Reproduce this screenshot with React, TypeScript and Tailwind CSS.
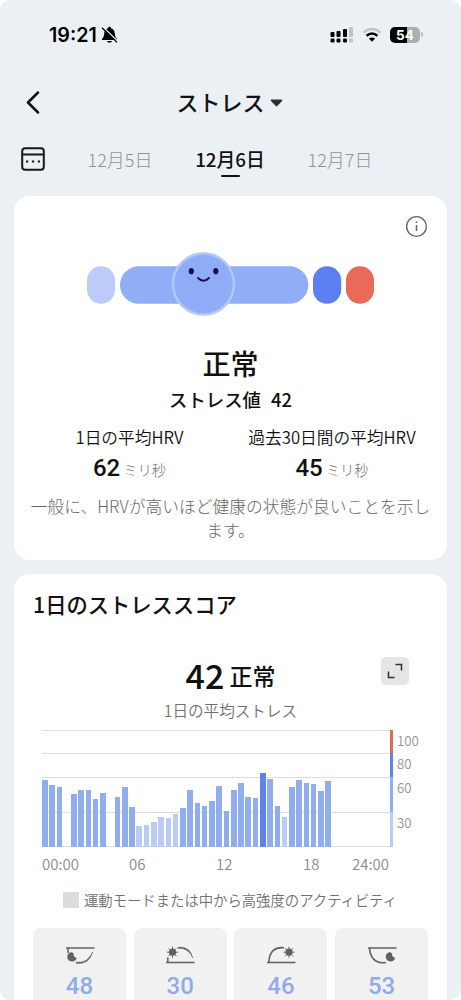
import type { ReactNode } from "react";

const days = ["12月5日", "12月6日", "12月7日"];

// one reading per half hour, 0 = no data
const scores = [
  57, 53, 51, 0, 45, 49, 49, 41, 46, 0, 43, 51, 34, 18, 19, 21, 26, 25, 28, 33, 49, 38, 35, 39,
  52, 31, 49, 55, 43, 42, 63, 58, 35, 26, 51, 57, 55, 54, 48, 56, 0, 0, 0, 0, 0, 0, 0, 0,
];

function Moon({ x }: { x: number }) {
  return (
    <path
      d="M4.8 6.3A4.7 4.7 0 1 0 10.6 11.8Q8.8 11.6 8 10.200Q7.300 9 7.600 7.400Q6.500 6.300 4.800 6.300Z"
      fill="#616161"
      transform={`translate(${x} 0)`}
    />
  );
}

function Sun({ x }: { x: number }) {
  return (
    <g transform={`translate(${x} 6.200)`} stroke="#616161" strokeWidth="0.900">
      <circle r="3.600" fill="#616161" stroke="none" />
      <path d="M0-5.700V5.700M-5.700 0H5.700M-4-4L4 4M-4 4L4-4" />
    </g>
  );
}

const periods: { value: number; icon: ReactNode }[] = [
  {
    value: 48,
    icon: (
      <>
        <path d="M0 2H28.500M2 2V7" stroke="#616161" strokeWidth="1.500" fill="none" />
        <path d="M10 16Q21 18 26.800 6Q23 19 10 17.200Z" fill="#616161" stroke="#616161" strokeWidth="0.500" />
        <Moon x={0} />
      </>
    ),
  },
  {
    value: 30,
    icon: (
      <>
        <path d="M0 16.500H28.500M1.800 16V11.500" stroke="#616161" strokeWidth="1.600" fill="none" />
        <path d="M12 1.200Q24 0 26.800 12Q23 2 12 2.300Z" fill="#616161" stroke="#616161" strokeWidth="0.500" />
        <Sun x={6.5} />
      </>
    ),
  },
  {
    value: 46,
    icon: (
      <>
        <path d="M0 16.500H28.500M2 16C2 6 8 0.500 17 1.800" stroke="#616161" strokeWidth="1.600" fill="none" />
        <Sun x={22} />
      </>
    ),
  },
  {
    value: 53,
    icon: (
      <>
        <path d="M0 2H28.500M1.500 2C2 12 8 18 18 16.500" stroke="#616161" strokeWidth="1.600" fill="none" />
        <Moon x={16.5} />
      </>
    ),
  },
];

function barColor(score: number) {
  if (score >= 60) return "bg-[#5f81ea]";
  if (score >= 30) return "bg-[#90adee]";
  return "bg-[#bccbf5]";
}

function StatusBar() {
  return (
    <div className="flex h-[69px] items-center justify-between pr-[38px] pl-[49px] text-black">
      <div className="flex items-center gap-[4px]">
        <span className="font-['Inter'] text-[19.700px] leading-6 font-semibold">19:21</span>
        <svg width="17" height="18" viewBox="0 0 17 18">
          <path d="M8.500 0.800C7.600 0.800 7 1.400 7 2.200C4.500 3 3.300 5 3.200 7.500C3 10.500 2.500 11 1 13V14H16V13C14.500 11 14 10.500 13.800 7.500C13.700 5 12.500 3 10 2.200C10 1.400 9.400 0.800 8.500 0.800zM6 15H11C10.500 17.300 6.500 17.300 6 15z" />
          <path d="M2 1L16.500 15" stroke="#ebf0f4" strokeWidth="1.300" />
          <path d="M1 1.700L16 16.400" stroke="#000" strokeWidth="1.300" />
        </svg>
      </div>
      <div className="flex items-center">
        <svg width="24" height="16" viewBox="0 0 24 16">
          <g fill="#050505">
            <rect x="0.500" y="5" width="4" height="5" rx="1" />
            <rect x="6.500" y="4" width="4" height="6" rx="1" />
            <rect x="13" y="2" width="4" height="8" rx="1" />
            <rect x="0.500" y="11.500" width="4" height="4" rx="1.200" />
            <rect x="6.500" y="11.500" width="4" height="4" rx="1.200" />
            <rect x="13" y="11.500" width="4" height="4" rx="1.200" />
          </g>
          <g fill="#bfc3c6">
            <rect x="19" y="0" width="4" height="10" rx="1" />
            <rect x="19" y="11.500" width="4" height="4" rx="1.200" />
          </g>
        </svg>
        <svg className="ml-2" width="20" height="16" viewBox="0 0 20 16" fill="none">
          <path d="M1.500 5.500Q10-1.500 18.500 5.500" stroke="#bfc3c6" strokeWidth="2.400" />
          <path d="M4.500 8.800Q10 4.200 15.500 8.800" stroke="#050505" strokeWidth="2.600" />
          <path d="M10 14.800L6.800 11.500Q10 9.400 13.200 11.500z" fill="#050505" />
        </svg>
        <div className="ml-[8px] flex h-4 w-[30px] items-center justify-center rounded-[5px] bg-linear-to-r from-[#050505] from-55% to-[#adb0b2] to-55% font-['Inter'] text-[13.500px] leading-4 font-bold text-white">
          54
        </div>
        <div className="ml-px h-[5px] w-[2px] rounded-r bg-[#b8bbbd]" />
      </div>
    </div>
  );
}

function Header() {
  return (
    <>
      <div className="relative flex h-[68px] items-center justify-center">
        <svg className="absolute top-[22px] left-[26px]" width="14" height="23" viewBox="0 0 14 23" fill="none">
          <path d="M12 1.500L2 11.500L12 21.500" stroke="#111318" strokeWidth="2.500" strokeLinecap="round" strokeLinejoin="round" />
        </svg>
        <h1 className="flex items-center pr-[2px] pb-[4px] text-[22px] font-medium">
          ストレス
          <svg className="mt-[3px] ml-[5px]" width="13" height="8" viewBox="0 0 13 8">
            <path d="M1.500 0.500H11.500Q13 0.800 12 2L7.500 6.800Q6.500 7.800 5.500 6.800L1 2Q0 0.800 1.500 0.500z" fill="#292e38" />
          </svg>
        </h1>
      </div>
      <div className="flex h-[59px] pl-[21px]">
        <svg className="mt-[10px] shrink-0" width="24" height="24" viewBox="0 0 24 24" fill="none">
          <rect x="1.200" y="1.200" width="21.600" height="21.600" rx="3" stroke="#15171c" strokeWidth="2" />
          <path d="M1 7.500H23" stroke="#15171c" strokeWidth="2" />
          <path d="M5 14.500H7.200M10.900 14.500H13.100M16.800 14.500H19" stroke="#15171c" strokeWidth="2" />
        </svg>
        <div className="ml-[20px] flex">
          {days.map((day, i) => (
            <div
              key={day}
              className={
                i === 1
                  ? "flex w-[110px] flex-col items-center pt-[8px] text-[18.800px] leading-[27px] font-medium"
                  : "flex w-[110px] flex-col items-center pt-[9px] text-[18px] leading-[27px] font-light text-[#8f9397]"
              }
            >
              {day}
              {i === 1 && <span className="mt-[3px] h-[2px] w-[19px] rounded bg-[#111318]" />}
            </div>
          ))}
        </div>
      </div>
    </>
  );
}

function StressLevel() {
  return (
    <svg className="mt-[56px] ml-[72px] block" width="290" height="64" viewBox="0 0 290 64">
      <rect x="1" y="14.300" width="28" height="37.500" rx="14" fill="#bccbf7" />
      <rect x="34" y="14.300" width="188.300" height="37.500" rx="18.700" fill="#90adf6" />
      <rect x="227" y="14.300" width="28.200" height="37.500" rx="14" fill="#5c80f2" />
      <rect x="260" y="14.300" width="28" height="37.500" rx="14" fill="#ea6959" />
      <circle cx="117.500" cy="32" r="30.500" fill="#8fadf6" stroke="#b1c8f8" strokeWidth="2.500" />
      <ellipse cx="105.300" cy="19.200" rx="2.600" ry="3.100" fill="#1c0a5c" />
      <ellipse cx="129.800" cy="19.200" rx="2.600" ry="3.100" fill="#1c0a5c" />
      <path d="M112 26Q117.500 31.500 123 26" stroke="#1c0a5c" strokeWidth="1.900" strokeLinecap="round" fill="none" />
    </svg>
  );
}

function Hrv({ label, value }: { label: string; value: number }) {
  return (
    <div className="text-center whitespace-nowrap">
      <p className="text-[16.700px] leading-6 font-[350]">{label}</p>
      <p className="mt-[3px] flex h-8 items-baseline justify-center gap-[3px]">
        <span className="font-['Roboto'] text-[24px] leading-8 font-medium">{value}</span>
        <span className="text-[14.300px] font-light text-[#707070]">ミリ秒</span>
      </p>
    </div>
  );
}

function SummaryCard() {
  return (
    <section className="relative mx-[14px] h-[364px] overflow-hidden rounded-[16px] bg-white">
      <svg className="absolute top-[19px] right-[19px]" width="23" height="23" viewBox="0 0 23 23" fill="none">
        <circle cx="11.500" cy="11.500" r="9.900" stroke="#666" strokeWidth="1.400" />
        <path d="M11.500 10V16M11.500 6.600V8" stroke="#666" strokeWidth="1.500" />
      </svg>
      <StressLevel />
      <h2 className="mt-[27px] text-center text-[28px] leading-[40px] font-medium">正常</h2>
      <p className="mt-[3px] text-center text-[18.400px] leading-[26px] font-medium">
        ストレス値<span className="ml-[10px]">42</span>
      </p>
      <div className="mt-[13px] flex">
        <div className="w-[231px]">
          <Hrv label="1日の平均HRV" value={62} />
        </div>
        <div className="ml-[2px] w-[170px]">
          <Hrv label="過去30日間の平均HRV" value={45} />
        </div>
      </div>
      <p className="mt-[11px] text-center text-[16.750px] leading-[23.500px] font-light text-[#686868]">
        一般に、HRVが高いほど健康の状態が良いことを示し
        <br />
        ます。
      </p>
    </section>
  );
}

function Chart() {
  return (
    <div className="mt-[8px] ml-[28px]">
      <div className="flex">
        <div className="relative h-[117px] w-[348px]">
          <div className="flex h-full flex-col">
            <div className="h-[23.400px] border-t border-[#dedede]" />
            <div className="h-[23.400px] border-t border-[#dedede]" />
            <div className="h-[35.100px] border-t border-[#dedede]" />
            <div className="h-[35.100px] border-y border-[#dedede]" />
          </div>
          <div className="absolute inset-0 flex items-end">
            {scores.map((score, i) => (
              <div key={i} className="flex h-full w-[7.270px] shrink-0 items-end">
                <div className={`w-[5.600px] ${barColor(score)}`} style={{ height: `${score}%` }} />
              </div>
            ))}
          </div>
        </div>
        <div className="h-[117px] w-[3px]">
          <div className="h-1/5 bg-[#dc6c60]" />
          <div className="h-1/5 bg-[#5f81ea]" />
          <div className="h-[30%] bg-[#90adee]" />
          <div className="h-[30%] bg-[#bccbf5]" />
        </div>
        <div className="ml-1 text-[13.200px] leading-[19px] font-[350] text-[#939393]">
          <p className="mt-[1px] h-[23.400px]">100</p>
          <p className="h-[23.400px]">80</p>
          <p className="h-[35.100px]">60</p>
          <p>30</p>
        </div>
      </div>
      <div className="mt-[7px] flex text-[15px] leading-5 font-[350] text-[#8c8c8c]">
        <span className="w-[87px]">00:00</span>
        <span className="w-[87px]">06</span>
        <span className="w-[87px]">12</span>
        <span className="w-[49px]">18</span>
        <span>24:00</span>
      </div>
    </div>
  );
}

function ScoreCard() {
  return (
    <section className="mx-[14px] mt-[14px] h-[460px] rounded-t-[16px] bg-white">
      <h2 className="pt-[15px] pl-[19px] text-[21.300px] leading-[30px] font-medium">1日のストレススコア</h2>
      <div className="relative mt-[32px] flex h-[48px] items-center justify-center gap-[5px]">
        <span className="text-[34px] leading-[48px] font-medium">42</span>
        <span className="text-[23px] leading-[48px] font-medium">正常</span>
        <button className="absolute top-[6px] right-[38px] flex size-7 items-center justify-center rounded-[5px] bg-[#e5e5e5]">
          <svg width="16" height="16" viewBox="0 0 16 16" fill="none" stroke="#303030" strokeWidth="1.500">
            <path d="M8.500 1.500H14.500V7.500M1.500 8.500V14.500H7.500" />
          </svg>
        </button>
      </div>
      <p className="text-center text-[15.600px] leading-[22px] font-[350] text-[#707070]">1日の平均ストレス</p>
      <div className="pt-px">
        <Chart />
      </div>
      <div className="mt-[16px] flex items-center pl-[49px] text-[14.350px] leading-5 font-[350] whitespace-nowrap text-[#707070]">
        <span className="mr-[5px] size-4 shrink-0 bg-[#d9dddc]" />
        運動モードまたは中から高強度のアクティビティ
      </div>
      <div className="mt-[18px] flex gap-[7.700px] pl-[19px]">
        {periods.map((p) => (
          <div key={p.value} className="flex h-[90px] w-[93px] shrink-0 flex-col items-center rounded-[8px] bg-[#f1f1f1] pt-[18px]">
            <svg className="ml-px" width="29" height="18" viewBox="0 0 29 18">
              {p.icon}
            </svg>
            <span className="mt-[6px] font-['Roboto'] text-[24px] leading-[32px] font-medium text-[#90aaea]">{p.value}</span>
          </div>
        ))}
      </div>
    </section>
  );
}

export default function App() {
  return (
    <div className="h-[1000px] w-full overflow-hidden bg-white">
      <main className="h-full overflow-hidden rounded-[10px] bg-[#ebf0f4] font-['Noto_Sans_CJK_JP',sans-serif] text-[#111]">
        <StatusBar />
        <Header />
        <SummaryCard />
        <ScoreCard />
      </main>
    </div>
  );
}
